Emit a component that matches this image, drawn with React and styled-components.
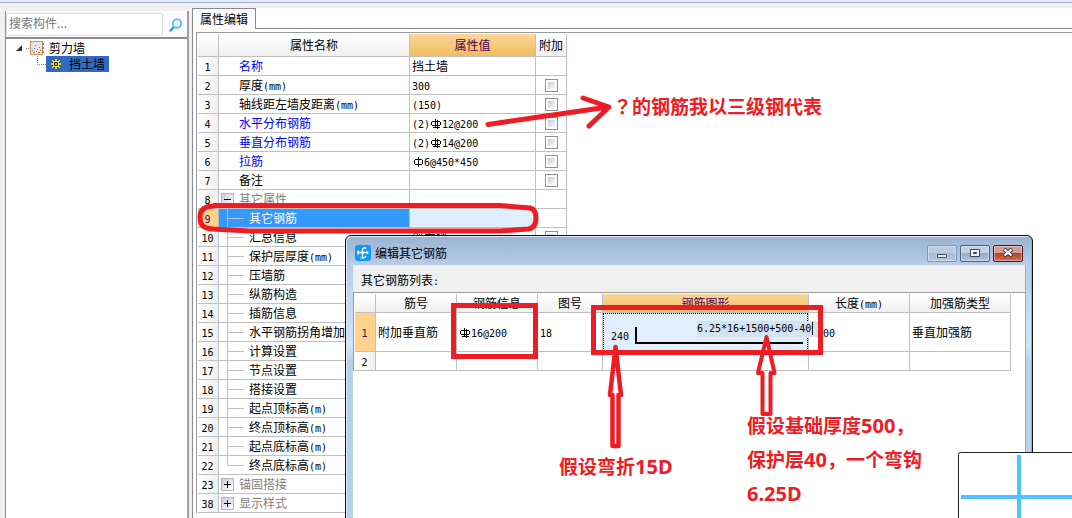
import React from 'react';
import styled, { createGlobalStyle, css } from 'styled-components';

const GRID = '#c0c0c0';
const RED = '#ee1c24';

const GlobalStyle = createGlobalStyle`
  *, *::before, *::after { box-sizing: border-box; }
  html, body { margin: 0; padding: 0; background: #f0f0f0; }
  body {
    font-family: "Noto Sans CJK SC", sans-serif;
    font-size: 12px;
    line-height: 18px;
    color: #000;
  }
  button, input { font: inherit; color: inherit; margin: 0; padding: 0; }
`;

const Page = styled.div`
  position: relative;
  display: flex;
  flex-direction: column;
  min-height: 100vh;
  overflow: hidden;
`;

const TopStrip = styled.div`
  flex: none;
  height: 8px;
  background: linear-gradient(#dfe9f6 2px, #a3b3d0 2px, #a3b3d0 3px, #e6f1fb 3px, #f0f0f0 5px);
`;

const Body = styled.div`
  flex: 1;
  display: flex;
`;

const Sidebar = styled.aside`
  flex: none;
  width: 184px;
  margin: 3px 3px 0 5px;
  display: flex;
  flex-direction: column;
  background: #fff;
  border-left: 1px solid #8c8c8c;
  border-right: 2px solid #a0a0a0;
`;

const SearchBar = styled.form`
  display: flex;
  height: 28px;
  padding: 2px 4px 1px 0;
  background: #fbfbfb;
  border-bottom: 2px solid #8c8c8c;
`;

const SearchInput = styled.input`
  flex: 1;
  min-width: 0;
  padding: 0 2px 4px;
  border: 1px solid #d5dfec;
  border-radius: 2px;
  background: #fff;
  outline: none;
  &::placeholder { color: #777; opacity: 1; }
`;

const SearchButton = styled.button`
  width: 20px;
  border: 0;
  background: none;
  display: flex;
  align-items: center;
  justify-content: flex-end;
`;

const Tree = styled.ul`
  list-style: none;
  margin: 0;
  padding: 1px 0 0;
  line-height: 16px;
`;

const TreeRow = styled.li`
  display: flex;
  align-items: center;
  height: 16px;
  padding-left: ${(p) => (p.$child ? 30 : 10)}px;
`;

const TreeLabel = styled.span`
  padding-left: 4px;
`;

const TreeSelected = styled.span`
  display: flex;
  align-items: center;
  gap: 7px;
  padding: 0 4px;
  background: #316ac5;
`;

const Main = styled.main`
  flex: 1;
  min-width: 0;
  background: #fff;
  border-left: 1px solid #8a8a94;
`;

const TabBar = styled.div`
  display: flex;
  height: 21px;
  &::after {
    content: '';
    flex: 1;
    border-bottom: 1px solid #8a8a94;
  }
`;

const Tab = styled.button`
  width: 63px;
  padding-bottom: 1px;
  border: solid #8a8a94;
  border-width: 1px 1px 0 0;
  background: #fff;
`;

const TableFrame = styled.div`
  margin: ${(p) => (p.$inset ? '3px 0 0 3px' : '0')};
  padding: 1px 0 0 1px;
  border: solid #9a9a9a;
  border-width: 1px 0 0 1px;
`;

const Grid = styled.table`
  width: ${(p) => p.$width}px;
  table-layout: fixed;
  border-collapse: separate;
  border-spacing: 0;
`;

const HeadCell = styled.th`
  height: ${(p) => p.$h}px;
  padding: 0;
  font-weight: 400;
  text-align: center;
  white-space: nowrap;
  border: solid ${GRID};
  border-width: 0 1px 1px 0;
  background: linear-gradient(#fff, #f0f0f0);
  ${(p) => p.$active && css`
    color: #500050;
    background: linear-gradient(#fbd69c, #efbd5c);
  `}
`;

const IndexCell = styled.th`
  padding: 0 1px 1px 0;
  font-weight: 400;
  border: solid ${GRID};
  border-width: 0 1px 1px 0;
  line-height: 16px;
  background: linear-gradient(90deg, #fff, #f0f0f0);
  ${(p) => p.$active && css`
    color: #500050;
    background: #ffd38b;
  `}
`;

const Cell = styled.td`
  height: ${(p) => p.$h || 19}px;
  padding: 0 0 0 ${(p) => (p.$pad === undefined ? 2 : p.$pad)}px;
  white-space: nowrap;
  overflow: hidden;
  border: solid ${GRID};
  border-width: 0 1px 1px 0;
  ${(p) => p.$active && css`background: #dfefff;`}
`;

const NameCell = styled(Cell)`
  padding: 0;
  color: ${(p) => p.$ink};
  ${(p) => p.$selected && css`background: #3399ff; color: #fff;`}
`;

const NameInner = styled.div`
  display: flex;
  height: 18px;
  padding-left: ${(p) => (p.$plain ? 20 : 0)}px;
`;

const Branch = styled.span`
  flex: none;
  width: 22px;
  margin: 0 0 0 8px;
  display: flex;
  &::before {
    content: '';
    width: 1px;
    height: ${(p) => (p.$last ? 10 : 19)}px;
    background: ${GRID};
  }
  &::after {
    content: '';
    width: 16px;
    height: 10px;
    border-bottom: 1px solid ${GRID};
  }
`;

const Toggle = styled.button`
  flex: none;
  width: 13px;
  height: 13px;
  margin: 3px 5px 0 2px;
  display: flex;
  align-items: center;
  justify-content: center;
  border: 1px solid #b4b4b4;
  background: linear-gradient(135deg, #c8ccd8, #fff);
`;

const CheckCell = styled(Cell)`
  padding: 0;
  text-align: center;
`;

const Check = styled.input`
  appearance: none;
  display: block;
  width: 13px;
  height: 13px;
  margin: 0 auto;
  border: 1px solid #8e8f8f;
  background: linear-gradient(135deg, #c3c8d2, #fdfdfd) content-box #f4f4f4;
  padding: 2px;
`;

const Mono = styled.span`
  font-family: "DejaVu Sans Mono", monospace;
  font-size: 10px;
  line-height: 10px;
`;

const Glyph = styled.svg`
  display: inline-block;
  vertical-align: -2px;
`;

const Dialog = styled.section`
  position: absolute;
  top: 235px;
  bottom: -8px;
  left: 345px;
  right: 39px;
  display: flex;
  flex-direction: column;
  padding: 0 6px 0 7px;
  border: 1px solid #111;
  border-radius: 6px 6px 0 0;
  background: linear-gradient(#9ab3d1, #b7cde8 29px, #d3e4f5 110px, #b9d1ea 125px);
  box-shadow: inset -1px 0 #5cc8ea, inset 1px 1px #dbe8f5;
`;

const TitleBar = styled.header`
  display: flex;
  align-items: center;
  height: 29px;
  padding: 5px 3px 0 2px;
`;

const Title = styled.h1`
  flex: 1;
  margin: 0 0 0 4px;
  font-size: 12px;
  font-weight: 400;
`;

const WindowButtons = styled.div`
  display: flex;
  gap: 3px;
`;

const WindowButton = styled.button`
  width: 30px;
  height: 17px;
  display: flex;
  align-items: center;
  justify-content: center;
  border: 1px solid ${(p) => (p.$close ? '#431422' : p.$dim ? '#7d95b4' : '#4a5f80')};
  border-radius: 2px;
  box-shadow: inset 0 0 0 1px rgba(255, 255, 255, 0.4);
  background: ${(p) => (p.$close
    ? 'linear-gradient(#d99a90 45%, #b8402c 50%, #cf6f55)'
    : p.$dim
      ? 'linear-gradient(#b7cbe2 45%, #a4bbd6 50%, #b4c9e1)'
      : 'linear-gradient(#bfd1e6 45%, #94adca 50%, #adc4de)')};
`;

const DialogBody = styled.div`
  flex: 1;
  background: #fff;
  border-right: 1px solid #a8a8b0;
`;

const ListLabel = styled.div`
  height: 27px;
  padding: 6px 0 0 8px;
  background: #f0f0f0;
`;

const ShapeCell = styled(Cell)`
  padding: 0;
  background: #dfefff;
  overflow: visible;
`;

const ShapeFocus = styled.div`
  display: flex;
  height: 38px;
  padding: 13px 4px 6px 7px;
  gap: 6px;
  border: 1px dotted #000;
`;

const ShapeSide = styled.label`
  line-height: 16px;
`;

const BarShape = styled.div`
  position: relative;
  flex: 1;
  border: solid #000;
  border-width: 0 0 2px 2px;
`;

const ShapeInput = styled.input`
  position: absolute;
  top: -6px;
  right: -20px;
  width: 126px;
  height: 16px;
  border: 0;
  outline: none;
  background: #d5e3f0;
  font-family: "DejaVu Sans Mono", monospace;
  font-size: 10px;
`;

const Caret = styled.i`
  position: absolute;
  top: -5px;
  right: -10px;
  width: 1px;
  height: 13px;
  background: #000;
`;

const AxisPreview = styled.svg`
  position: absolute;
  right: 0;
  bottom: 0;
`;

const Marks = styled.svg`
  position: absolute;
  top: 0;
  left: 0;
  pointer-events: none;
`;

const Note = styled.p`
  position: absolute;
  left: ${(p) => p.$x}px;
  top: ${(p) => p.$y}px;
  margin: 0;
  color: ${RED};
  font-family: "Noto Sans CJK SC", sans-serif;
  font-size: 19px;
  font-weight: 700;
  line-height: 34px;
  white-space: nowrap;
`;

const NoteLatin = styled.span`
  font-family: "Noto Sans", sans-serif;
  font-size: 20px;
  line-height: 20px;
`;

const NoteMark = styled.span`
  font-family: "Noto Sans CJK TC", sans-serif;
  line-height: 20px;
`;

/* Latin runs are set in the fixed-width face, Chinese runs in the page face. */
function Label({ children }) {
  return children.split(/([\x21-\x7e]+)/).map((run, i) =>
    i % 2 ? <Mono key={i}>{run}</Mono> : run
  );
}

function Rebar({ grade }) {
  return (
    <Glyph width="12" height="12" viewBox="0 0 12 12" aria-label={`${grade}级钢筋`} shapeRendering="crispEdges">
      {grade === 1 ? (
        <path d="M6 1h1v10h-1zM3 3h7v1h-7zM3 8h7v1h-7zM2 4h1v4h-1zM10 4h1v4h-1z" />
      ) : (
        <path d="M5 1h1v9h-1zM7 2h1v9h-1zM2 3h8v1h-8zM2 7h8v1h-8zM1 4h1v3h-1zM10 4h1v3h-1zM3 9h7v1h-7z" />
      )}
    </Glyph>
  );
}

const BLUE = '#0000ff';
const GREY = '#808080';

const properties = [
  { n: 1, name: '名称', ink: BLUE, value: '挡土墙' },
  { n: 2, name: '厚度(mm)', value: '300', check: true },
  { n: 3, name: '轴线距左墙皮距离(mm)', value: '(150)', check: true },
  { n: 4, name: '水平分布钢筋', ink: BLUE, prefix: '(2)', grade: 3, value: '12@200', check: true },
  { n: 5, name: '垂直分布钢筋', ink: BLUE, prefix: '(2)', grade: 3, value: '14@200', check: true },
  { n: 6, name: '拉筋', ink: BLUE, grade: 1, value: '6@450*450', check: true },
  { n: 7, name: '备注', check: true },
  { n: 8, name: '其它属性', ink: GREY, group: 'open' },
  { n: 9, name: '其它钢筋', child: true, selected: true },
  { n: 10, name: '汇总信息', child: true, value: '剪力墙', check: true },
  { n: 11, name: '保护层厚度(mm)', child: true },
  { n: 12, name: '压墙筋', child: true },
  { n: 13, name: '纵筋构造', child: true },
  { n: 14, name: '插筋信息', child: true },
  { n: 15, name: '水平钢筋拐角增加', child: true },
  { n: 16, name: '计算设置', child: true },
  { n: 17, name: '节点设置', child: true },
  { n: 18, name: '搭接设置', child: true },
  { n: 19, name: '起点顶标高(m)', child: true },
  { n: 20, name: '终点顶标高(m)', child: true },
  { n: 21, name: '起点底标高(m)', child: true },
  { n: 22, name: '终点底标高(m)', child: true, last: true },
  { n: 23, name: '锚固搭接', ink: GREY, group: 'closed' },
  { n: 38, name: '显示样式', ink: GREY, group: 'closed' },
];

function PropertyRow({ row }) {
  return (
    <tr>
      <IndexCell scope="row" $active={row.selected}><Mono>{row.n}</Mono></IndexCell>
      <NameCell $ink={row.ink || '#000'} $selected={row.selected}>
        <NameInner $plain={!row.child && !row.group}>
          {row.child && <Branch $last={row.last} />}
          {row.group && (
            <Toggle aria-label={row.name}>
              <svg width="9" height="9" shapeRendering="crispEdges" stroke="#000" fill="none">
                <path d={row.group === 'open' ? 'M1 4.5h7' : 'M1 4.5h7M4.5 1v7'} />
              </svg>
            </Toggle>
          )}
          <span><Label>{row.name}</Label></span>
        </NameInner>
      </NameCell>
      <Cell $active={row.selected}>
        {row.prefix && <Label>{row.prefix}</Label>}
        {row.grade && <Rebar grade={row.grade} />}
        {row.value && <Label>{row.value}</Label>}
      </Cell>
      <CheckCell>{row.check && <Check type="checkbox" aria-label={`附加 ${row.name}`} />}</CheckCell>
    </tr>
  );
}

function PropertyTable() {
  return (
    <Grid $width={369}>
      <colgroup>
        <col width="21" /><col width="191" /><col width="126" /><col width="31" />
      </colgroup>
      <thead>
        <tr>
          <HeadCell $h={23} />
          <HeadCell $h={23}>属性名称</HeadCell>
          <HeadCell $h={23} $active>属性值</HeadCell>
          <HeadCell $h={23}>附加</HeadCell>
        </tr>
      </thead>
      <tbody>
        {properties.map((row) => <PropertyRow key={row.n} row={row} />)}
      </tbody>
    </Grid>
  );
}

const rebarColumns = [
  { title: '', width: 21 },
  { title: '筋号', width: 81 },
  { title: '钢筋信息', width: 81 },
  { title: '图号', width: 65 },
  { title: '钢筋图形', width: 206, active: true },
  { title: '长度(mm)', width: 101 },
  { title: '加强筋类型', width: 101 },
];

function RebarTable() {
  return (
    <Grid $width={656}>
      <colgroup>
        {rebarColumns.map((c) => <col key={c.title} width={c.width} />)}
      </colgroup>
      <thead>
        <tr>
          {rebarColumns.map((c) => (
            <HeadCell key={c.title} $h={19} $active={c.active}><Label>{c.title}</Label></HeadCell>
          ))}
        </tr>
      </thead>
      <tbody>
        <tr>
          <IndexCell scope="row" $active><Mono>1</Mono></IndexCell>
          <Cell $h={39}>附加垂直筋</Cell>
          <Cell $h={39}><Rebar grade={3} /><Label>16@200</Label></Cell>
          <Cell $h={39}><Label>18</Label></Cell>
          <ShapeCell $h={39}>
            <ShapeFocus>
              <ShapeSide htmlFor="bar-shape"><Mono>240</Mono></ShapeSide>
              <BarShape>
                <ShapeInput id="bar-shape" aria-label="钢筋图形" defaultValue="6.25*16+1500+500-40" />
                <Caret />
              </BarShape>
            </ShapeFocus>
          </ShapeCell>
          <Cell $h={39} $pad={14}><Label>00</Label></Cell>
          <Cell $h={39}>垂直加强筋</Cell>
        </tr>
        <tr>
          <IndexCell scope="row"><Mono>2</Mono></IndexCell>
          <Cell /><Cell /><Cell /><Cell /><Cell /><Cell />
        </tr>
      </tbody>
    </Grid>
  );
}

function SearchIcon() {
  return (
    <svg width="14" height="14" viewBox="0 0 14 14" fill="none">
      <path d="M5 9 1.500 12.500" stroke="#3fa0dc" strokeWidth="2.500" strokeLinecap="round" />
      <circle cx="8" cy="5.500" r="4.200" fill="#eef8ff" stroke="#6bbdec" strokeWidth="2" />
    </svg>
  );
}

function WallIcon() {
  return (
    <svg width="15" height="14" viewBox="0 0 15 14" shapeRendering="crispEdges">
      <path d="M.5.5h12v13H.5z" fill="#e6e6e6" stroke="#e08a5c" />
      <path d="M2 9h1v1H2zM4 7h1v1H4zM3 11h2v1H3zM6 10h1v1H6zM7 8h1v1H7zM8 11h2v1H8zM10 9h1v1h-1zM5 4h1v1H5zM9 6h1v1H9z" fill="#777" />
      <path d="M12 3h2M12 7h2M12 11h2" stroke="#d4702c" strokeWidth="2" />
    </svg>
  );
}

function GearIcon() {
  return (
    <svg width="12" height="12" viewBox="0 0 12 12" fill="none">
      <circle cx="6" cy="6" r="4.500" fill="#222" />
      <path d="M6 1v10M1 6h10M2.300 2.300l7.400 7.400M9.700 2.300l-7.400 7.400" stroke="#ffee30" strokeWidth="1.500" />
      <circle cx="6" cy="6" r="2.800" fill="#222" stroke="#ffee30" strokeWidth="1.200" />
      <circle cx="6" cy="6" r="1" fill="#fff79a" />
    </svg>
  );
}

function AppIcon() {
  return (
    <svg width="16" height="16" viewBox="0 0 16 16" fill="none">
      <rect width="16" height="16" rx="3" fill="#109af4" />
      <path d="M7.500 13V4.500a2 2 0 0 1 3.500-1M2.500 7.500H12M3.500 5.500 2.500 7.500l1 2M12.500 6v3M5.500 12.500c2 1.200 4.500.5 5.500-1.500" stroke="#fff" strokeWidth="1.400" />
    </svg>
  );
}

export default function App() {
  return (
    <Page>
      <GlobalStyle />
      <TopStrip />
      <Body>
        <Sidebar>
          <SearchBar>
            <SearchInput type="text" placeholder="搜索构件..." aria-label="搜索构件" />
            <SearchButton type="button" aria-label="搜索"><SearchIcon /></SearchButton>
          </SearchBar>
          <Tree>
            <TreeRow>
              <svg width="14" height="8" viewBox="0 0 14 8">
                <path d="M6 1v6H0z" fill="#333" />
                <path d="M10 4.500h4" stroke="#888" strokeDasharray="1 1" />
              </svg>
              <WallIcon />
              <TreeLabel>剪力墙</TreeLabel>
            </TreeRow>
            <TreeRow $child>
              <svg width="10" height="16" viewBox="0 0 10 16" shapeRendering="crispEdges">
                <path d="M1.500 0v8.500H10" fill="none" stroke="#888" strokeDasharray="1 1" />
              </svg>
              <TreeSelected><GearIcon />挡土墙</TreeSelected>
            </TreeRow>
          </Tree>
        </Sidebar>
        <Main>
          <TabBar><Tab type="button">属性编辑</Tab></TabBar>
          <TableFrame $inset><PropertyTable /></TableFrame>
        </Main>
      </Body>

      <Dialog role="dialog" aria-label="编辑其它钢筋">
        <TitleBar>
          <AppIcon />
          <Title>编辑其它钢筋</Title>
          <WindowButtons>
            <WindowButton $dim aria-label="最小化">
              <svg width="12" height="12"><path d="M1.500 7.500h9v3h-9z" fill="#e8e8e8" stroke="#555" /></svg>
            </WindowButton>
            <WindowButton aria-label="最大化">
              <svg width="12" height="12"><path d="M1.500 2.500h9v7h-9z" fill="#f2f2f2" stroke="#444" /><path d="M4.500 5.500h3v1h-3z" fill="#8aa" stroke="#444" /></svg>
            </WindowButton>
            <WindowButton $close aria-label="关闭">
              <svg width="12" height="12"><path d="m2 2 8 7M10 2 2 9" stroke="#444" strokeWidth="4" /><path d="m2.500 2.500 7 6M9.500 2.500l-7 6" stroke="#fff" strokeWidth="2.200" /></svg>
            </WindowButton>
          </WindowButtons>
        </TitleBar>
        <DialogBody>
          <ListLabel><Label>其它钢筋列表:</Label></ListLabel>
          <TableFrame><RebarTable /></TableFrame>
        </DialogBody>
      </Dialog>

      <AxisPreview width="114" height="66" viewBox="0 0 114 66">
        <path d="M.5 70V2.500q0-2 2-2H120V70z" fill="#fff" stroke="#222" />
        <path d="M61 3v63M3 45h111" stroke="#4dc4ff" strokeWidth="4" />
      </AxisPreview>

      <Marks width="1072" height="518" viewBox="0 0 1072 518" fill="none" stroke={RED} strokeWidth="5" strokeLinejoin="round" strokeLinecap="round">
        <path d="M488 124.500 608 107M583 98l26 9-20 19" />
        <path d="M214 206C204 206 200 210 200 217S202 228 212 229L250 231H500L528 229Q536 228 536 218 536 209 530 208L500 205.500H214" />
        <path d="M453.500 305.500h82v51h-82zM593.500 307.500h227v45h-227z" strokeLinejoin="miter" />
        <path d="M615.500 347 610 395h2.500v51h6v-51h2.500z" strokeWidth="4.500" />
        <path d="M766.500 337 758 373h4.500v41h8v-41h4z" strokeWidth="4" />
      </Marks>
      <Note $x={613} $y={89}><NoteMark>？</NoteMark>的钢筋我以三级钢代表</Note>
      <Note $x={559} $y={449}>假设弯折<NoteLatin>15D</NoteLatin></Note>
      <Note $x={747} $y={408}>
        假设基础厚度<NoteLatin>500</NoteLatin>，<br />
        保护层<NoteLatin>40</NoteLatin>，一个弯钩<br />
        <NoteLatin>6.25D</NoteLatin>
      </Note>
    </Page>
  );
}
